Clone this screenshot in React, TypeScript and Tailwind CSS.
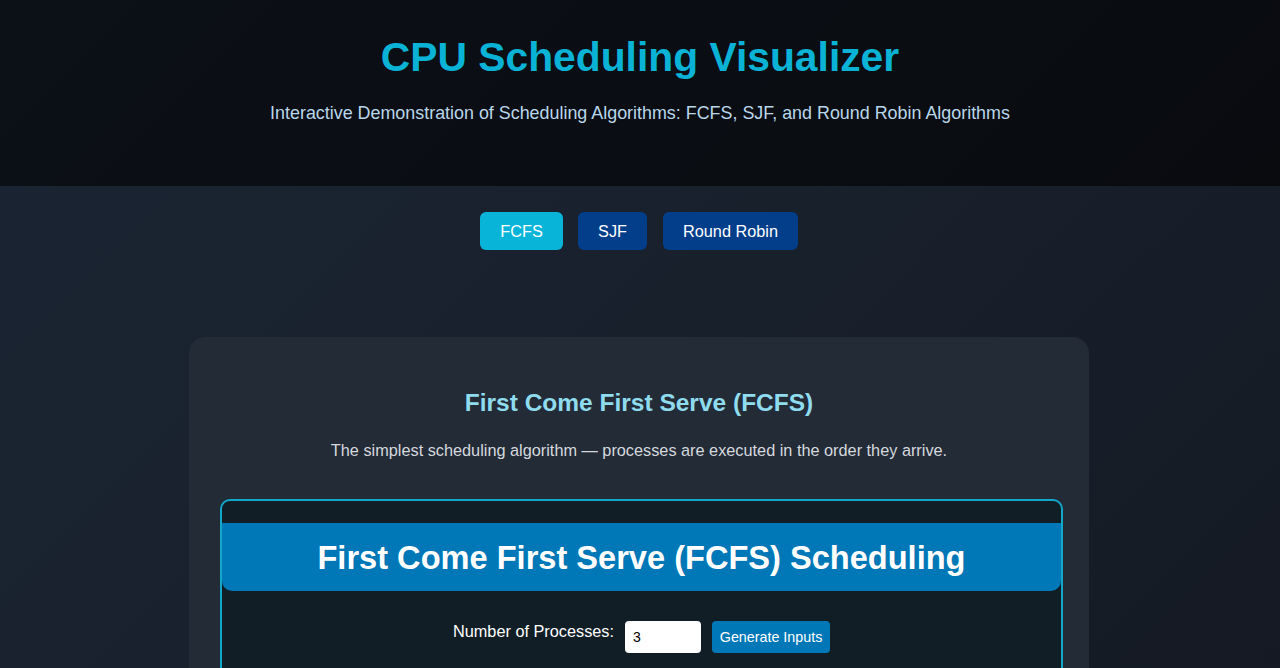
import React from "react";

export default function App() {
  return (
    <div className="min-h-[668px] bg-[linear-gradient(135deg,#1b2533_0%,#18202c_50%,#141922_100%)] font-['Liberation_Sans',Arial,sans-serif]">
      <header className="h-[186px] bg-[linear-gradient(135deg,#0c1017_0%,#0a0d12_60%,#090b0f_100%)] flex flex-col items-center pt-[33px]">
        <h1 className="text-[40.8px] leading-[48px] font-bold text-[#0ab3d6]">CPU Scheduling Visualizer</h1>
        <p className="mt-[19px] text-[17.9px] leading-[26px] text-[#b9d7ea]">
          Interactive Demonstration of Scheduling Algorithms: FCFS, SJF, and Round Robin Algorithms
        </p>
      </header>
      <nav className="flex justify-center pt-[26px] -translate-x-[1px]">
        <button className="h-[38px] w-[83px] rounded-[6px] bg-[#08b5d8] text-white text-[16.3px] pt-[1px]">FCFS</button>
        <button className="ml-[15px] h-[38px] w-[69px] rounded-[6px] bg-[#023e8a] text-white text-[16.3px] pt-[1px]">SJF</button>
        <button className="ml-[16px] h-[38px] w-[135px] rounded-[6px] bg-[#023e8a] text-white text-[16.3px] pt-[1px]">Round Robin</button>
      </nav>
      <main className="flex justify-center pt-[87px]">
        <section className="w-[900px] -translate-x-[1px] rounded-[16px] bg-[#232b37] pl-[31px] pt-[51px] pb-[40px]">
          <h2 className="text-center text-[24.5px] leading-[30px] font-bold text-[#8fdcee] pr-[31px]">First Come First Serve (FCFS)</h2>
          <p className="mt-[22px] text-center text-[16.3px] leading-[20px] text-[#d5d9de] pr-[31px]">
            The simplest scheduling algorithm — processes are executed in the order they arrive.
          </p>
          <div className="mt-[39px] w-[843px] rounded-[10px] border-2 border-[#13a7c9] bg-[#111e26] pt-[22px] pb-[30px]">
            <div className="h-[68px] rounded-b-[10px] bg-[#0077b6] flex items-center justify-center pt-[2px]">
              <h3 className="text-[32.6px] font-bold text-white">First Come First Serve (FCFS) Scheduling</h3>
            </div>
            <div className="mt-[30px] flex justify-center items-start">
              <label className="text-[16.3px] text-white leading-[20px]">Number of Processes:</label>
              <input
                defaultValue="3"
                className="ml-[11px] h-[32px] w-[76px] rounded-[4px] bg-white px-[8px] text-[14px] text-black outline-none"
              />
              <button className="ml-[11px] h-[32px] w-[118px] rounded-[4px] bg-[#0077b6] text-white text-[14.3px] pt-[1px]">Generate Inputs</button>
            </div>
            <div className="h-[100px]" />
          </div>
        </section>
      </main>
    </div>
  );
}
